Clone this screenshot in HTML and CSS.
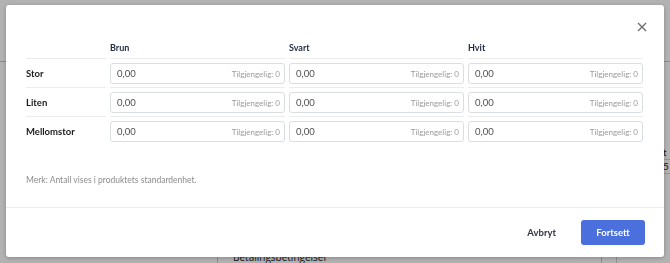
FILE: index.html
```html
<!DOCTYPE html>
<html lang="no">
<head>
  <meta charset="UTF-8">
  <meta name="viewport" content="width=device-width, initial-scale=1.0">
  <title>Antall per variant</title>
  <link rel="stylesheet" href="styles.css">
</head>
<body>
  <div class="page">
    <div class="page-bar"></div>
    <div class="page-body">
      <div class="page-col page-col-left"></div>
      <div class="page-col page-col-mid">
        <div class="page-label">Betalingsbetingelser</div>
      </div>
      <div class="page-col page-col-narrow"></div>
      <div class="page-col page-col-right">
        <div class="page-cell">t</div>
        <div class="page-cell">5</div>
      </div>
    </div>
  </div>
  <div class="overlay"></div>

  <div class="modal">
    <div class="modal-head">
      <button class="close" type="button" aria-label="Lukk">
        <svg width="10" height="10" viewBox="0 0 10 10">
          <path d="M1 1L9 9M9 1L1 9" stroke="#6b6b6b" stroke-width="1.3" fill="none"/>
        </svg>
      </button>
    </div>

    <div class="modal-body">
      <div class="grid">
        <div class="cell head"></div>
        <div class="cell head">Brun</div>
        <div class="cell head">Svart</div>
        <div class="cell head">Hvit</div>

        <div class="cell row-label">Stor</div>
        <div class="cell"><label class="qty"><input value="0,00"><span>Tilgjengelig: 0</span></label></div>
        <div class="cell"><label class="qty"><input value="0,00"><span>Tilgjengelig: 0</span></label></div>
        <div class="cell"><label class="qty"><input value="0,00"><span>Tilgjengelig: 0</span></label></div>

        <div class="cell row-label">Liten</div>
        <div class="cell"><label class="qty"><input value="0,00"><span>Tilgjengelig: 0</span></label></div>
        <div class="cell"><label class="qty"><input value="0,00"><span>Tilgjengelig: 0</span></label></div>
        <div class="cell"><label class="qty"><input value="0,00"><span>Tilgjengelig: 0</span></label></div>

        <div class="cell row-label last">Mellomstor</div>
        <div class="cell last"><label class="qty"><input value="0,00"><span>Tilgjengelig: 0</span></label></div>
        <div class="cell last"><label class="qty"><input value="0,00"><span>Tilgjengelig: 0</span></label></div>
        <div class="cell last"><label class="qty"><input value="0,00"><span>Tilgjengelig: 0</span></label></div>
      </div>

      <p class="note">Merk: Antall vises i produktets standardenhet.</p>
    </div>

    <div class="modal-foot">
      <button class="btn btn-link" type="button">Avbryt</button>
      <button class="btn btn-primary" type="button">Fortsett</button>
    </div>
  </div>
</body>
</html>
```

FILE: styles.css
```css
* {
  box-sizing: border-box;
}
body {
  margin: 0;
  font-family: Lato, "Open Sans", sans-serif;
  background-color: #ffffff;
  height: 263px;
  overflow: hidden;
}

/* page behind the dialog */
.page {
  height: 263px;
  display: flex;
  flex-direction: column;
  overflow: hidden;
}
.page-bar {
  height: 66px;
  border-bottom: 1px solid #c8c8c8;
}
.page-body {
  flex: 1;
  display: flex;
}
.page-col {
  height: 100%;
}
.page-col-left {
  width: 218px;
  border-right: 1px solid #cfcfcf;
}
.page-col-mid {
  width: 384px;
  border-right: 1px solid #cfcfcf;
  padding-top: 189px;
}
.page-label {
  padding-left: 15px;
  font-size: 10px;
  font-family: "Open Sans", sans-serif;
  color: #222;
  line-height: 12px;
}
.page-col-narrow {
  width: 15px;
  border-right: 1px solid #cfcfcf;
}
.page-col-right {
  flex: 1;
  padding-top: 84px;
}
.page-cell {
  font-size: 10px;
  color: #222;
  height: 14px;
  line-height: 13px;
  padding-left: 46px;
  border-bottom: 1px solid #d6d6d6;
}

.overlay {
  position: fixed;
  inset: 0;
  background-color: rgba(0, 0, 0, 0.3);
}

/* dialog */
.modal {
  position: fixed;
  left: 6px;
  top: 5px;
  width: 658px;
  height: 252px;
  background-color: #ffffff;
  border-radius: 3px;
  box-shadow: 0 1px 4px rgba(0, 0, 0, 0.25);
  display: flex;
  flex-direction: column;
}
.modal-head {
  display: flex;
  justify-content: flex-end;
  padding: 16px 16px 0 0;
  height: 36px;
}
.close {
  border: none;
  background: none;
  padding: 0;
  width: 12px;
  height: 12px;
  display: flex;
  align-items: center;
  justify-content: center;
  cursor: pointer;
}
.modal-body {
  flex: 1;
  padding: 1px 21px 0 20px;
}
.grid {
  display: grid;
  grid-template-columns: 80px 175px 175px 175px;
  column-gap: 4px;
}
.cell {
  border-bottom: 1px solid #ececec;
  padding: 4px 0 3px;
  display: flex;
  align-items: center;
  min-width: 0;
}
.cell.head {
  padding: 0;
  height: 17px;
  align-items: flex-start;
  font-size: 9px;
  font-weight: 700;
  color: #1f2940;
}
.cell.last {
  border-bottom: none;
}
.row-label {
  font-size: 9.5px;
  font-weight: 700;
  color: #1c1c1c;
}
.qty {
  flex: 1;
  min-width: 0;
  height: 21px;
  display: flex;
  align-items: center;
  border: 1px solid #dadde2;
  border-radius: 3px;
  padding: 0 4px 0 6px;
}
.qty input {
  flex: 1;
  min-width: 0;
  width: 0;
  border: none;
  outline: none;
  padding: 0;
  font-family: inherit;
  font-size: 9.5px;
  color: #505050;
  background: transparent;
}
.qty span {
  font-size: 8px;
  color: #9a9a9a;
  white-space: nowrap;
}
.note {
  margin: 30px 0 0;
  font-size: 8.5px;
  color: #8c8c8c;
}

.modal-foot {
  border-top: 1px solid #ececec;
  height: 50px;
  display: flex;
  align-items: center;
  justify-content: flex-end;
  padding-right: 19px;
  gap: 25px;
}
.btn {
  font-family: inherit;
  font-size: 9.5px;
  font-weight: 700;
  border: none;
  border-radius: 3px;
  cursor: pointer;
}
.btn-link {
  background: none;
  color: #2f3440;
  padding: 0;
}
.btn-primary {
  background-color: #4b6fdc;
  color: #ffffff;
  width: 64px;
  height: 25px;
}
```
